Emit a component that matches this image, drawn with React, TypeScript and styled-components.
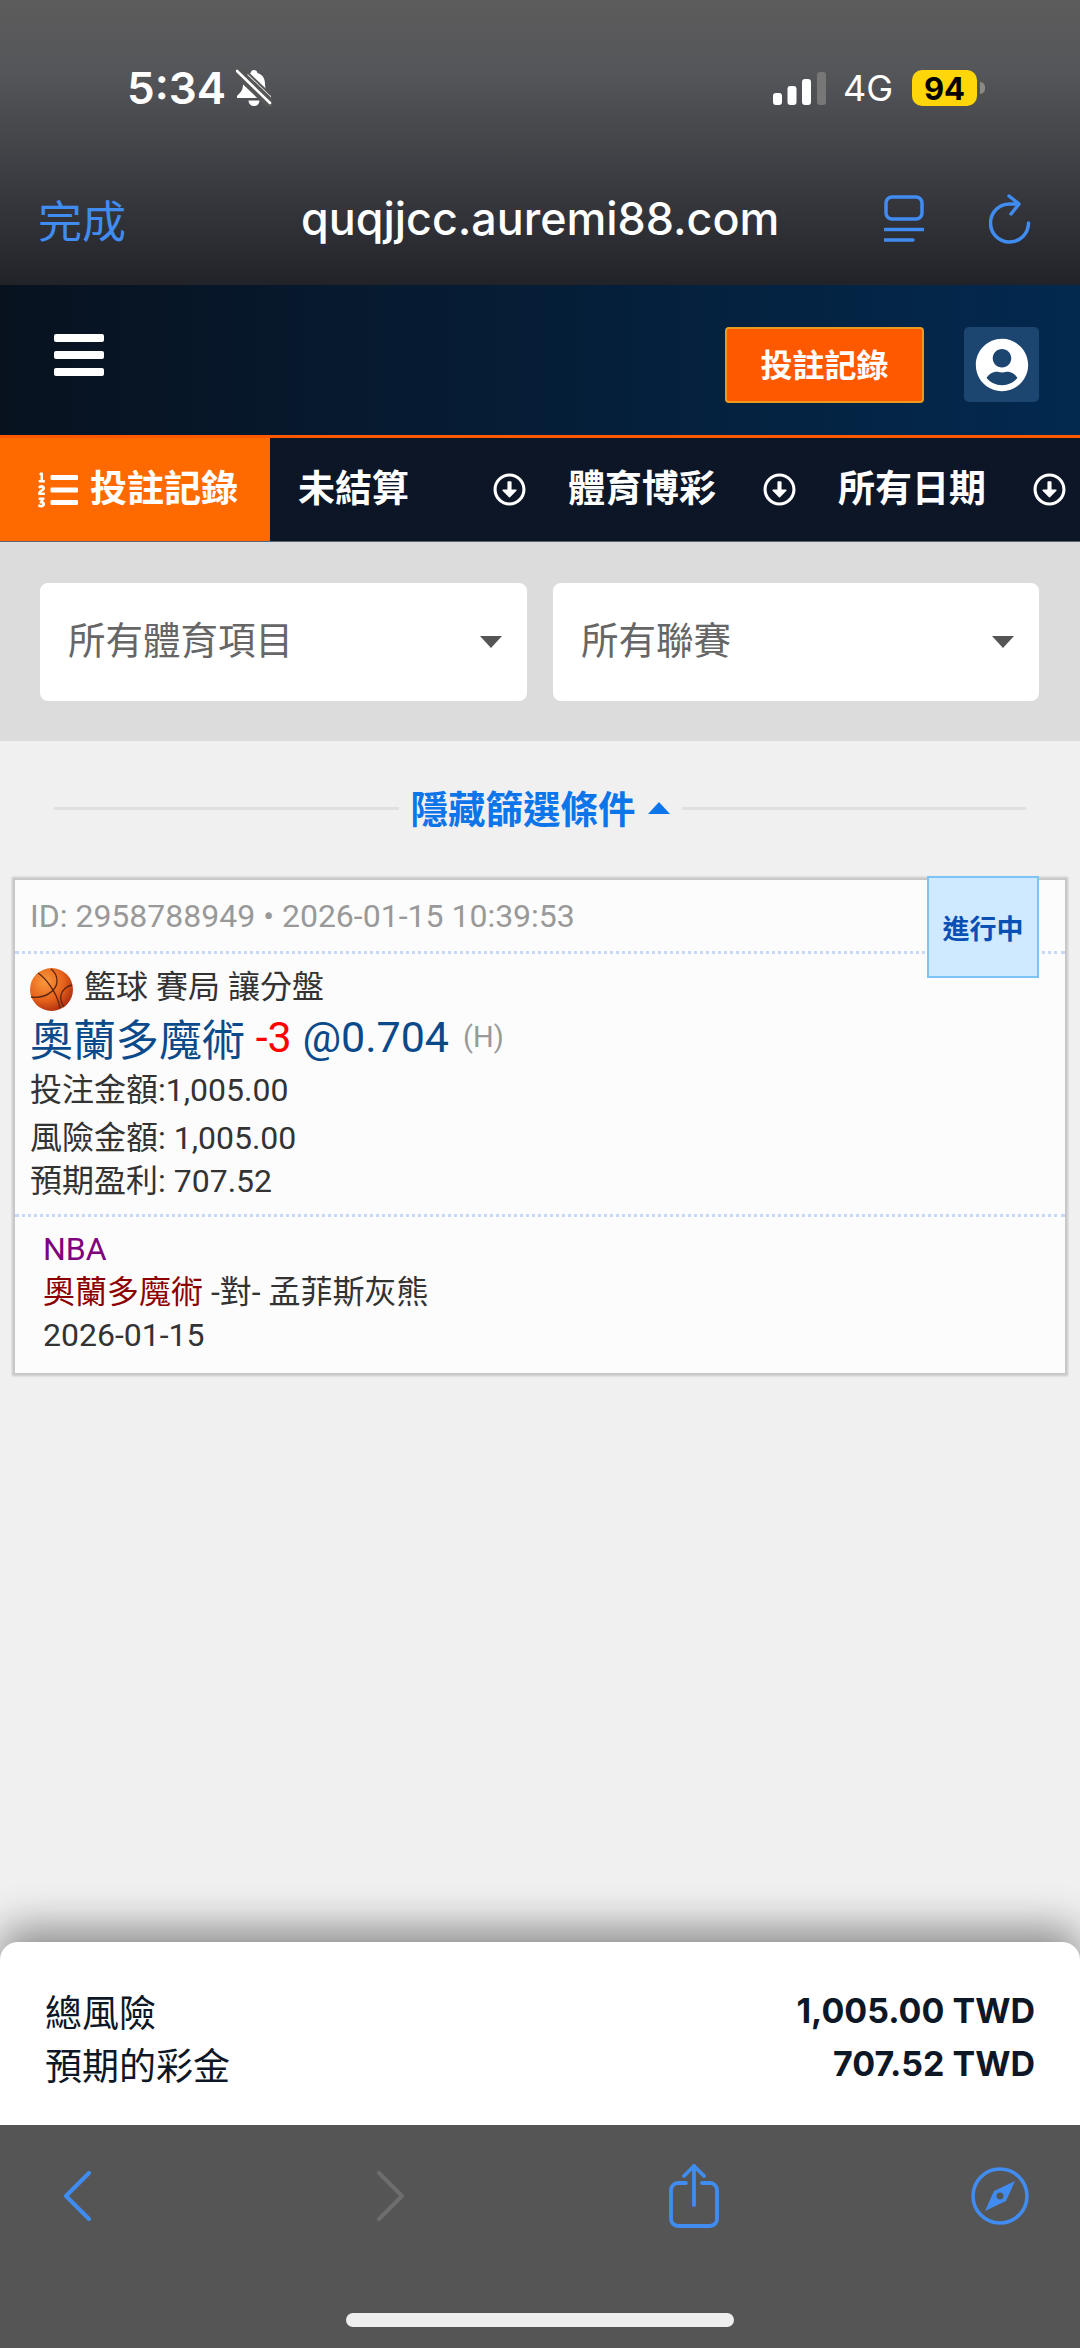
import styled, { createGlobalStyle } from "styled-components";
import { FaListOl, FaRegArrowAltCircleDown, FaUserCircle } from "react-icons/fa";

const cjk = `Roboto, "Noto Sans CJK TC", sans-serif`;
const appleBlue = "#408cf0";

const GlobalStyle = createGlobalStyle`
  html, body {
    margin: 0;
    padding: 0;
    background: #f0f0f0;
  }
  * {
    box-sizing: border-box;
  }
`;

const Page = styled.div`
  width: 1080px;
  height: 2348px;
  display: flex;
  flex-direction: column;
  overflow: hidden;
  background: #f0f0f0;
  font-family: ${cjk};
`;

const BrowserHeader = styled.header`
  height: 285px;
  background: linear-gradient(180deg, #5c5c5c 0%, #55565a 25%, #212329 100%);
  display: flex;
  flex-direction: column;
`;

const StatusBar = styled.div`
  height: 176px;
  padding: 0 103px 0 127px;
  display: flex;
  align-items: center;
  justify-content: space-between;
  color: #fff;
`;

const Clock = styled.div`
  display: flex;
  align-items: center;
  gap: 10px;
  font-family: Inter, sans-serif;
  font-size: 44px;
  font-weight: 600;
`;

const StatusRight = styled.div`
  display: flex;
  align-items: center;
`;

const Network = styled.span`
  margin: 0 19px 0 17px;
  font-family: Inter, sans-serif;
  font-size: 36px;
  font-weight: 400;
`;

const Battery = styled.div`
  position: relative;
  width: 65px;
  height: 36px;
  border-radius: 10px;
  background: #ffd60a;
  color: #000;
  display: flex;
  align-items: center;
  justify-content: center;
  font-family: Inter, sans-serif;
  font-size: 31px;
  font-weight: 700;

  &::after {
    content: "";
    position: absolute;
    right: -8px;
    top: 12px;
    width: 5px;
    height: 12px;
    border-radius: 0 6px 6px 0;
    background: #8a8a8a;
  }
`;

const UrlBar = styled.div`
  height: 85px;
  padding: 0 39px 0 38px;
  display: flex;
  align-items: center;
`;

const Done = styled.span`
  width: 263px;
  color: ${appleBlue};
  font-size: 44px;
`;

const Url = styled.span`
  width: 583px;
  color: #fff;
  font-family: Inter, sans-serif;
  font-size: 44.8px;
  font-weight: 500;
`;

const UrlIcons = styled.div`
  display: flex;
  align-items: center;
  gap: 65px;
`;

const TopNav = styled.div`
  height: 150px;
  padding: 42px 41px 0 54px;
  display: flex;
  align-items: flex-start;
  background: linear-gradient(90deg, #08121f 0%, #03294f 100%);
`;

const Burger = styled.div`
  width: 50px;
  margin-top: 7px;
  margin-right: auto;
  display: flex;
  flex-direction: column;
  gap: 9px;
`;

const BurgerBar = styled.span`
  height: 8px;
  border-radius: 2px;
  background: #fff;
`;

const HistoryButton = styled.div`
  width: 199px;
  height: 76px;
  padding-bottom: 4px;
  border: 2px solid #eb9a1f;
  border-radius: 4px;
  background: #ff5900;
  color: #fff;
  display: flex;
  align-items: center;
  justify-content: center;
  font-size: 32px;
  font-weight: 700;
`;

const Avatar = styled.div`
  width: 75px;
  height: 75px;
  margin-left: 40px;
  border-radius: 5px;
  background: #1c4570;
  color: #fff;
  display: flex;
  align-items: center;
  justify-content: center;
  font-size: 54px;
`;

const TabRow = styled.nav`
  height: 107px;
  border-top: 3px solid #ff5900;
  border-bottom: 1px solid #5c6470;
  display: grid;
  grid-template-columns: repeat(4, 270px);
  background: #0c1626;
`;

const ActiveTab = styled.div`
  padding-left: 38px;
  display: flex;
  align-items: center;
  gap: 12px;
  background: #ff6a00;
  color: #fff;
  font-size: 37px;
  font-weight: 700;
`;

const Tab = styled.div`
  padding: 0 14px 0 28px;
  display: flex;
  align-items: center;
  justify-content: space-between;
  color: #fff;
  font-size: 37px;
  font-weight: 700;
`;

const Lifted = styled.span<{ $by: number }>`
  margin-bottom: ${({ $by }) => $by}px;
`;

const FilterPanel = styled.section`
  height: 199px;
  padding: 41px 41px 0 40px;
  display: grid;
  grid-template-columns: 487px 486px;
  grid-template-rows: 118px;
  gap: 26px;
  background: #dcdcdc;
`;

const Select = styled.div`
  padding: 0 25px 0 28px;
  display: flex;
  align-items: center;
  justify-content: space-between;
  border-radius: 8px;
  background: #fff;
  color: #666;
  font-size: 37.5px;
`;

const Caret = styled.span<{ $up?: boolean; $color: string }>`
  width: 0;
  height: 0;
  border-left: 11px solid transparent;
  border-right: 11px solid transparent;
  ${({ $up, $color }) =>
    $up
      ? `border-bottom: 12px solid ${$color};`
      : `border-top: 12px solid ${$color};`}
`;

const FilterToggle = styled.div`
  height: 134px;
  padding: 0 54px;
  display: flex;
  align-items: center;
  gap: 12px;
  color: #0d75ea;
  font-size: 37.5px;
  font-weight: 700;
`;

const ToggleLine = styled.span`
  flex: 1;
  height: 3px;
  background: #e0e0e0;
`;

const ToggleLabel = styled.div`
  display: flex;
  align-items: center;
  gap: 12px;
`;

const BetCard = styled.article`
  position: relative;
  width: 1050px;
  height: 493px;
  margin: 5px 15px 0;
  background: #fcfcfc;
  box-shadow: 0 0 2px 3px rgba(0, 0, 0, 0.17);
  color: #333;
`;

const CardHead = styled.div`
  height: 74px;
  padding: 0 15px;
  display: flex;
  align-items: center;
  border-bottom: 3px dotted #c6d8f6;
  color: #999;
  font-size: 32px;
`;

const StatusBadge = styled.div`
  position: absolute;
  top: -4px;
  right: 26px;
  width: 112px;
  height: 102px;
  border: 2px solid #7cc4f5;
  background: #cfe9ff;
  color: #0a50b4;
  display: flex;
  align-items: center;
  justify-content: center;
  font-size: 27px;
  font-weight: 700;
`;

const BetBody = styled.div`
  height: 263px;
  padding: 13px 15px 0;
  border-bottom: 3px dotted #c6d8f6;
`;

const Market = styled.div`
  height: 44px;
  display: flex;
  align-items: center;
  gap: 11px;
  font-size: 32px;
`;

const Selection = styled.div`
  height: 52px;
  display: flex;
  align-items: center;
  color: #0b4a8a;
  font-size: 43px;
  white-space: pre;
`;

const Handicap = styled.span`
  color: #f00;
`;

const Venue = styled.span`
  margin-left: 14px;
  color: #999;
  font-size: 29px;
`;

const BetLine = styled.div<{ $height: number }>`
  height: ${({ $height }) => $height}px;
  display: flex;
  align-items: center;
  font-size: 32px;
`;

const EventInfo = styled.div`
  padding: 11px 28px 0;
  font-size: 32px;
  line-height: 43px;
`;

const League = styled.div`
  color: #800080;
`;

const HomeTeam = styled.span`
  color: #8b0000;
`;

const Summary = styled.section`
  position: relative;
  height: 183px;
  margin-top: auto;
  padding: 42px 45px 0;
  border-radius: 18px 18px 0 0;
  background: #fff;
  box-shadow: 0 -14px 42px rgba(0, 0, 0, 0.42);
  color: #0e1726;
  font-size: 37px;
`;

const SummaryRow = styled.div`
  height: 53px;
  display: flex;
  align-items: center;
  justify-content: space-between;
`;

const SummaryValue = styled.span`
  font-family: Inter, sans-serif;
  font-size: 34px;
  font-weight: 700;
`;

const BrowserFooter = styled.footer`
  position: relative;
  height: 223px;
  padding-top: 39px;
  background: #555;
`;

const ToolRow = styled.div`
  height: 64px;
  padding-left: 64px;
  display: grid;
  grid-template-columns: 313px 292px 302px 58px;
  align-items: center;
  justify-items: start;
`;

const HomeBar = styled.div`
  width: 388px;
  height: 14px;
  margin: 85px auto 0;
  border-radius: 7px;
  background: #eee;
`;

function MutedBellIcon() {
  return (
    <svg width="36" height="38" viewBox="0 0 36 38">
      <path
        d="M18 1c-2 0-3 1-3.4 3C9 5.5 7 10 7 15c0 6-2 8-6 12v2h34v-2c-4-4-6-6-6-12 0-5-2-9.500-7.600-11C21 2 20 1 18 1z"
        fill="#fff"
      />
      <path d="M12.500 31.500a5.500 5.500 0 0 0 11 0z" fill="#fff" />
      <path d="M-1 1l38 36" stroke="#565656" strokeWidth="10" />
      <path d="M1 2l33 32" stroke="#fff" strokeWidth="2.600" strokeLinecap="round" />
      <path d="M7 -1l28 27" stroke="#565656" strokeWidth="2" />
    </svg>
  );
}

function SignalIcon() {
  return (
    <svg width="53" height="33" viewBox="0 0 53 33">
      <rect x="0" y="21" width="9" height="12" rx="3" fill="#fff" />
      <rect x="14.5" y="14" width="9" height="19" rx="3" fill="#fff" />
      <rect x="29" y="7" width="9" height="26" rx="3" fill="#fff" />
      <rect x="44" y="0" width="9" height="33" rx="3" fill="#777" />
    </svg>
  );
}

function TabsIcon() {
  return (
    <svg width="40" height="47" viewBox="0 0 40 47" fill="none" stroke={appleBlue} strokeWidth="3.5">
      <rect x="2" y="2" width="36" height="22" rx="6" />
      <path d="M1 34.500h38" strokeLinecap="round" />
      <path d="M1 45h28" strokeLinecap="round" />
    </svg>
  );
}

function ReloadIcon() {
  return (
    <svg width="42" height="50" viewBox="0 0 42 50" fill="none" stroke={appleBlue} strokeWidth="3.5" strokeLinecap="round" strokeLinejoin="round">
      <path d="M39.500 29a19 19 0 1 1-19-19h9" />
      <path d="M20 2l10 8-8 10" />
    </svg>
  );
}

function BasketballIcon() {
  return (
    <svg width="43" height="43" viewBox="0 0 43 43" fill="none">
      <defs>
        <radialGradient id="ball" cx="35%" cy="32%" r="75%">
          <stop offset="0%" stopColor="#fb9a3c" />
          <stop offset="60%" stopColor="#e5601a" />
          <stop offset="100%" stopColor="#a82a10" />
        </radialGradient>
      </defs>
      <circle cx="21.500" cy="21.500" r="21.500" fill="url(#ball)" />
      <g stroke="#5a2410" strokeWidth="1.300">
        <path d="M21 1c4 3 6 7 6 12 0 9-11 18-26 16" />
        <path d="M8 5c6 4 19 18 22 35" />
        <path d="M42 17c-5 1-10 5-11 10-1 5 1 9 3 12" />
      </g>
    </svg>
  );
}

function BackIcon({ flip, color }: { flip?: boolean; color: string }) {
  return (
    <svg width="27" height="50" viewBox="0 0 27 50" fill="none" stroke={color} strokeWidth="4" strokeLinecap="round" strokeLinejoin="round">
      <path d={flip ? "M2 2l23 23L2 48" : "M25 2L2 25l23 23"} />
    </svg>
  );
}

function ShareIcon() {
  return (
    <svg width="50" height="64" viewBox="0 0 50 64" fill="none" stroke={appleBlue} strokeWidth="3.8" strokeLinecap="round" strokeLinejoin="round">
      <path d="M17 19H9a7 7 0 0 0-7 7v29a7 7 0 0 0 7 7h32a7 7 0 0 0 7-7V26a7 7 0 0 0-7-7h-8" />
      <path d="M25 41V2" />
      <path d="M15 12L25 2l10 10" />
    </svg>
  );
}

function CompassIcon() {
  return (
    <svg width="58" height="58" viewBox="0 0 58 58" fill="none">
      <circle cx="29" cy="29" r="27" stroke={appleBlue} strokeWidth="3.6" />
      <path d="M44 14L35 34 14 44l9-20z" fill={appleBlue} strokeLinejoin="round" />
      <circle cx="29" cy="29" r="3.500" fill="#555" />
    </svg>
  );
}

export default function App() {
  return (
    <Page>
      <GlobalStyle />
      <BrowserHeader>
        <StatusBar>
          <Clock>
            5:34
            <MutedBellIcon />
          </Clock>
          <StatusRight>
            <SignalIcon />
            <Network>4G</Network>
            <Battery>94</Battery>
          </StatusRight>
        </StatusBar>
        <UrlBar>
          <Done>完成</Done>
          <Url>quqjjcc.auremi88.com</Url>
          <UrlIcons>
            <TabsIcon />
            <ReloadIcon />
          </UrlIcons>
        </UrlBar>
      </BrowserHeader>

      <TopNav>
        <Burger>
          <BurgerBar />
          <BurgerBar />
          <BurgerBar />
        </Burger>
        <HistoryButton>投註記錄</HistoryButton>
        <Avatar>
          <FaUserCircle />
        </Avatar>
      </TopNav>

      <TabRow>
        <ActiveTab>
          <FaListOl size={40} />
          <Lifted $by={8}>投註記錄</Lifted>
        </ActiveTab>
        <Tab>
          <Lifted $by={8}>未結算</Lifted>
          <FaRegArrowAltCircleDown size={33} />
        </Tab>
        <Tab>
          <Lifted $by={8}>體育博彩</Lifted>
          <FaRegArrowAltCircleDown size={33} />
        </Tab>
        <Tab>
          <Lifted $by={8}>所有日期</Lifted>
          <FaRegArrowAltCircleDown size={33} />
        </Tab>
      </TabRow>

      <FilterPanel>
        <Select>
          <Lifted $by={10}>所有體育項目</Lifted>
          <Caret $color="#555" />
        </Select>
        <Select>
          <Lifted $by={10}>所有聯賽</Lifted>
          <Caret $color="#555" />
        </Select>
      </FilterPanel>

      <FilterToggle>
        <ToggleLine />
        <ToggleLabel>
          <Lifted $by={3}>隱藏篩選條件</Lifted>
          <Caret $up $color="#0d75ea" />
        </ToggleLabel>
        <ToggleLine />
      </FilterToggle>

      <BetCard>
        <CardHead>ID: 2958788949 • 2026-01-15 10:39:53</CardHead>
        <StatusBadge>進行中</StatusBadge>
        <BetBody>
          <Market>
            <BasketballIcon />
            <Lifted $by={11}>籃球 賽局 讓分盤</Lifted>
          </Market>
          <Selection>
            奧蘭多魔術 <Handicap>-3</Handicap> @0.704<Venue>(H)</Venue>
          </Selection>
          <BetLine $height={48}>投注金額:1,005.00</BetLine>
          <BetLine $height={47}>風險金額: 1,005.00</BetLine>
          <BetLine $height={39}>預期盈利: 707.52</BetLine>
        </BetBody>
        <EventInfo>
          <League>NBA</League>
          <div>
            <HomeTeam>奧蘭多魔術</HomeTeam> -對- 孟菲斯灰熊
          </div>
          <div>2026-01-15</div>
        </EventInfo>
      </BetCard>

      <Summary>
        <SummaryRow>
          總風險
          <SummaryValue>1,005.00 TWD</SummaryValue>
        </SummaryRow>
        <SummaryRow>
          預期的彩金
          <SummaryValue>707.52 TWD</SummaryValue>
        </SummaryRow>
      </Summary>

      <BrowserFooter>
        <ToolRow>
          <BackIcon color={appleBlue} />
          <BackIcon flip color="#6d6d6d" />
          <ShareIcon />
          <CompassIcon />
        </ToolRow>
        <HomeBar />
      </BrowserFooter>
    </Page>
  );
}
